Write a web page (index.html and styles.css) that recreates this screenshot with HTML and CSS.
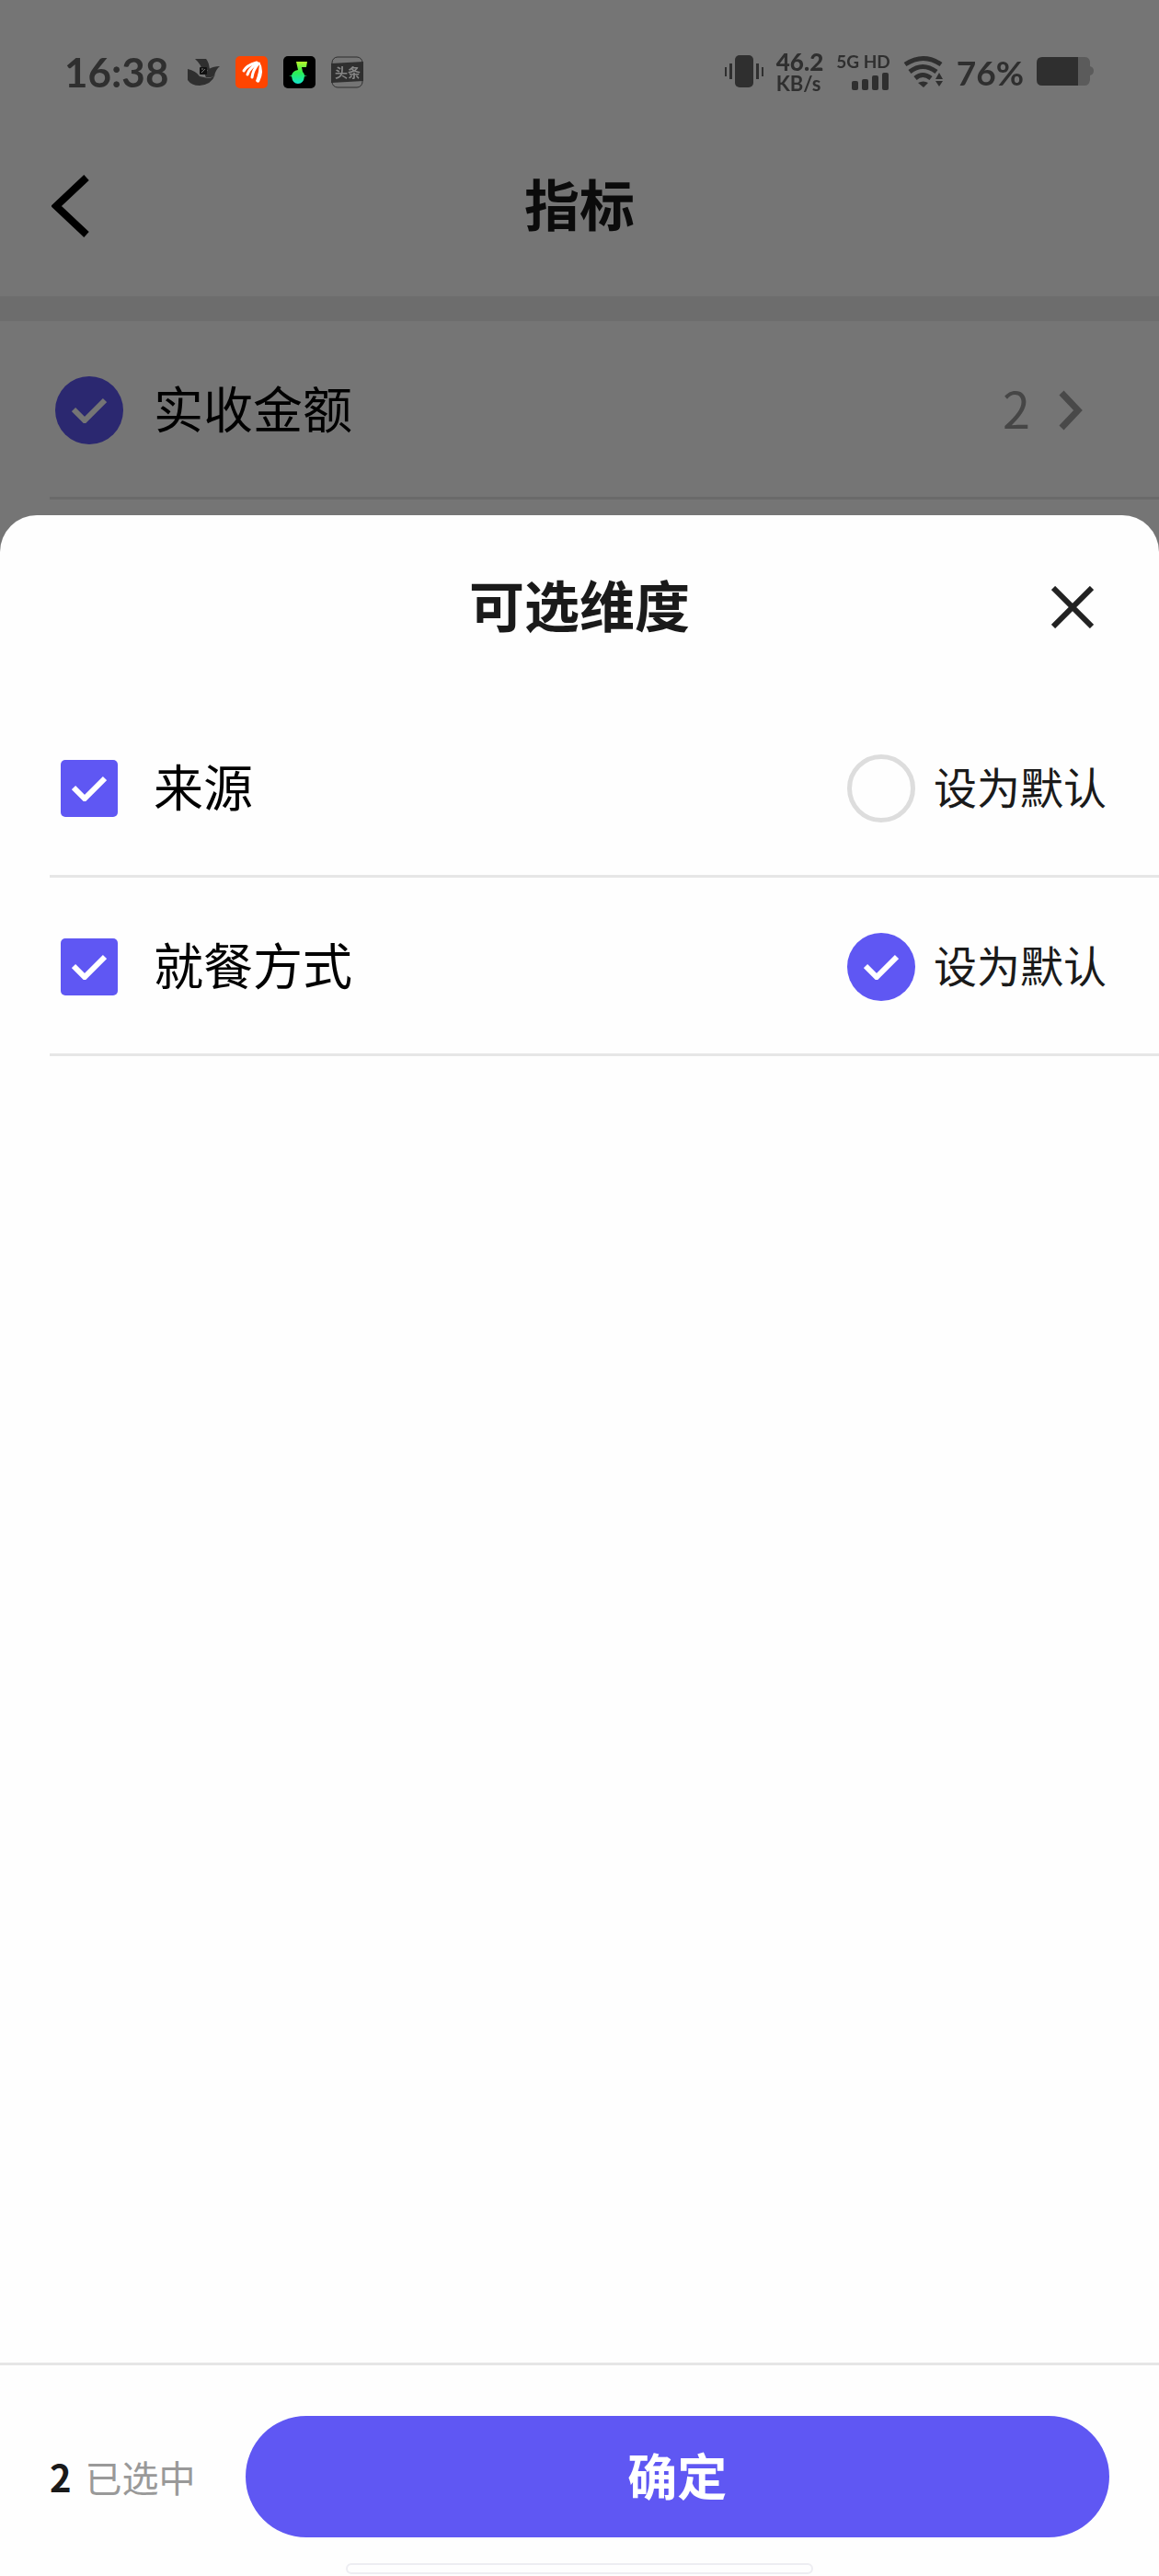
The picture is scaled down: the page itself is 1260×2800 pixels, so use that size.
FILE: index.html
```
<!DOCTYPE html>
<html lang="zh-CN">
<head>
    <meta charset="UTF-8">
    <meta name="viewport" content="width=device-width, initial-scale=1.0">
    <title>指标</title>
    <link rel="stylesheet" href="styles.css">
</head>
<body>
    <div class="status-bar">
        <span class="time">16:38</span>
        <div class="apps">
            <svg width="35" height="36" viewBox="0 0 35 36">
                <path fill="#2f2f2f" d="M8 4h12q3 3 4 12-5 0-8 2-1-8-8-14zM0 15q9 2 13 8l9 2q5 0 8-4-4 11-17 12Q4 33 0 27zM19 22q2-10 16-10-4 3-6 10-3 3-9 2z"/>
                <rect x="13" y="13" width="8" height="8" rx="1" fill="#111"/>
                <path d="M15 19l4-4M15 15h2" stroke="#777" fill="none"/>
            </svg>
            <svg width="35" height="36" viewBox="0 0 35 36">
                <rect y="1" width="35" height="35" rx="5" fill="#ff4500"/>
                <g fill="none" stroke="#fff" stroke-linecap="round">
                    <path d="M23 8Q12 11 9 17" stroke-width="3"/>
                    <path d="M24 9q-9 5-11 12" stroke-width="3"/>
                    <path d="M25 9q-6 7-7 15" stroke-width="3"/>
                </g>
                <path fill="#fff" d="M26 7q6 10 0 22-2 2-4-1 4-10 4-21z"/>
            </svg>
            <svg width="35" height="36" viewBox="0 0 35 36">
                <defs>
                    <linearGradient id="note" x1="0" y1="0" x2="0" y2="1">
                        <stop offset="0" stop-color="#b8f52c"/>
                        <stop offset=".5" stop-color="#2bee52"/>
                        <stop offset="1" stop-color="#14e6d0"/>
                    </linearGradient>
                </defs>
                <rect y="1" width="35" height="35" rx="5" fill="#000"/>
                <path fill="url(#note)" d="M14 7h12l-1 6h-5l1 5q2 2 2 4h3l-3 1q-1 8-7 8t-7-8l-3-1h3q1-5 7-6z"/>
            </svg>
            <svg width="35" height="36" viewBox="0 0 35 36">
                <rect x="1" y="2" width="33" height="33" rx="6" fill="none" stroke="#2f2f2f"/>
                <path fill="#2f2f2f" d="M0 9l35-2v21L0 30z"/>
                <text class="app-text" x="18" y="24" text-anchor="middle">头条</text>
            </svg>
        </div>
        <div class="signals">
            <svg width="42" height="36" viewBox="0 0 42 36" fill="#2f2f2f">
                <rect x="11" y="0" width="20" height="35" rx="5"/>
                <path d="M0 13h2v10H0zM5 9h3v17H5zM34 9h3v17h-3zM40 13h2v10h-2z"/>
            </svg>
            <div class="speed"><b>46.2</b><span>KB/s</span></div>
            <div class="mobile">
                <b>5G HD</b>
                <svg width="42" height="20" viewBox="0 0 42 20" fill="#2f2f2f">
                    <rect x="0" y="9" width="7" height="10" rx="2"/>
                    <rect x="11" y="7" width="7" height="12" rx="2"/>
                    <rect x="22" y="3" width="7" height="16" rx="2"/>
                    <rect x="33" y="0" width="7" height="19" rx="2"/>
                </svg>
            </div>
            <svg width="44" height="36" viewBox="0 0 44 36">
                <g fill="none" stroke="#2f2f2f" stroke-width="5">
                    <path d="M2 10q20-13 39 0M7 18q14-11 29 0M13 25q8-7 17 0"/>
                </g>
                <path fill="#2f2f2f" d="M16 30q6-3 11 0l-5 5zM35 26l4-7 4 7zM35 28h8l-4 6z"/>
            </svg>
            <span class="percent">76%</span>
            <svg width="63" height="32" viewBox="0 0 63 32">
                <path fill="#5b5b5b" d="M40 0h12q5 0 6 5v5q4 1 4 5t-4 5v5q-1 6-6 6H40z"/>
                <path fill="#2f2f2f" d="M6 0h39v31H6q-6 0-6-6V6q0-6 6-6z"/>
            </svg>
        </div>
    </div>

    <header class="nav">
        <button class="icon-btn" aria-label="返回">
            <svg width="42" height="68" viewBox="0 0 42 68"><path d="M38 3L5 34l33 31" fill="none" stroke="#000" stroke-width="8"/></svg>
        </button>
        <h1>指标</h1>
    </header>

    <div class="metric">
        <div class="row">
            <input class="tick round" type="checkbox" id="amount" checked>
            <label class="name" for="amount">实收金额</label>
            <span class="count">2</span>
            <svg class="arrow" width="26" height="44" viewBox="0 0 26 44"><path d="M3 3l18 19L3 41" fill="none" stroke="#a0a0a0" stroke-width="7"/></svg>
        </div>
    </div>

    <div class="mask">
        <section class="sheet">
            <div class="sheet-head">
                <h2>可选维度</h2>
                <button class="icon-btn close" aria-label="关闭">
                    <svg width="46" height="46" viewBox="0 0 46 46"><path d="M2 2l42 42M44 2L2 44" fill="none" stroke="#222" stroke-width="6"/></svg>
                </button>
            </div>
            <div class="options">
                <div class="row">
                    <input class="tick" type="checkbox" id="source" checked>
                    <label class="name" for="source">来源</label>
                    <input class="tick round" type="radio" name="default" id="defSource">
                    <label class="default" for="defSource">设为默认</label>
                </div>
                <div class="row">
                    <input class="tick" type="checkbox" id="dining" checked>
                    <label class="name" for="dining">就餐方式</label>
                    <input class="tick round" type="radio" name="default" id="defDining" checked>
                    <label class="default" for="defDining">设为默认</label>
                </div>
            </div>
            <footer class="bottom">
                <div class="selected"><b>2</b><span>已选中</span></div>
                <button class="confirm">确定</button>
            </footer>
            <div class="home-bar"></div>
        </section>
    </div>
</body>
</html>
```
FILE: styles.css
```
* { box-sizing: border-box; }
body {
    margin: 0;
    min-height: 100vh;
    background: #fff;
    color: #000;
    font-family: "Noto Sans CJK SC", "Noto Sans", sans-serif;
}
h1, h2 { margin: 0; padding-bottom: 8px; color: #1a1a1a; font-size: 60px; font-weight: 700; line-height: 1; }
svg { display: block; flex: none; }
button { border: none; cursor: pointer; font-family: inherit; }

/* status bar stays above the mask */
.status-bar {
    position: relative;
    z-index: 2;
    display: flex;
    align-items: center;
    height: 126px;
    padding: 30px 70px 0;
    color: #2f2f2f;
    font-family: Lato, "Noto Sans", sans-serif;
    line-height: 1;
}
.time { font-size: 44px; font-weight: 700; }
.apps { display: flex; gap: 17px; margin-left: 21px; }
.app-text { font: 700 14px "Noto Sans CJK SC", sans-serif; fill: #858585; }
.signals { display: flex; align-items: center; gap: 14px; margin-left: auto; }
.speed { display: flex; flex-direction: column; font-size: 22px; font-weight: 700; line-height: 22px; }
.speed b { font-size: 26px; line-height: 26px; }
.mobile { display: flex; flex-direction: column; align-items: flex-end; gap: 3px; font-size: 19px; line-height: 18px; }
.percent { font-size: 37px; font-weight: 700; }

.nav {
    position: relative;
    display: flex;
    align-items: center;
    justify-content: center;
    height: 196px;
}
.icon-btn { position: absolute; left: 56px; padding: 0; background: none; }
.icon-btn.close { left: auto; right: 71px; }

.metric { border-top: 27px solid #ededed; padding-left: 54px; }
.row {
    display: flex;
    align-items: center;
    height: 194px;
    border-bottom: 3px solid #e6e6e6;
    padding: 2px 57px 0 0;
}
.tick {
    appearance: none;
    flex: none;
    width: 62px;
    height: 62px;
    margin: 0 12px;
    border-radius: 5px;
    border: 5px solid #ddd;
}
.tick.round { width: 74px; height: 74px; margin: 0 6px; border-radius: 50%; }
.tick:checked {
    border: none;
    background: #5f57f3 url("data:image/svg+xml,%3Csvg xmlns='http://www.w3.org/2000/svg' width='38' height='28'%3E%3Cpath d='M2 13l12 12L36 3' fill='none' stroke='%23fff' stroke-width='6'/%3E%3C/svg%3E") center no-repeat;
}
.name { flex: 1; margin-left: 27px; padding-bottom: 6px; font-size: 54px; line-height: 1; }
.default { margin-left: 14px; padding-bottom: 6px; color: #1a1a1a; font-size: 47px; line-height: 1; }
.count { padding-bottom: 6px; color: #999; font-size: 54px; line-height: 1; }
.arrow { margin: 0 26px 0 31px; }

.mask {
    position: fixed;
    inset: 0;
    display: flex;
    align-items: flex-end;
    background: rgba(0, 0, 0, .54);
}
.sheet {
    display: flex;
    flex-direction: column;
    width: 100%;
    height: 80%;
    background: #fefefe;
    border-radius: 40px 40px 0 0;
}
.sheet-head {
    position: relative;
    display: flex;
    align-items: center;
    justify-content: center;
    height: 200px;
}
.options { flex: 1; padding-left: 54px; }

.bottom {
    display: flex;
    align-items: center;
    gap: 54px;
    padding: 55px 54px 28px;
    border-top: 3px solid #e6e6e6;
}
.selected { display: flex; gap: 15px; color: #999; font-size: 40px; line-height: 1; }
.selected b { color: #1a1a1a; }
.confirm {
    flex: 1;
    height: 132px;
    padding: 0 0 6px;
    border-radius: 66px;
    background: #5f57f3;
    color: #fff;
    font-size: 54px;
    font-weight: 700;
}
.home-bar {
    width: 508px;
    height: 12px;
    margin: 0 auto 2px;
    border: 2px solid #ededf2;
    border-radius: 6px;
}
```
